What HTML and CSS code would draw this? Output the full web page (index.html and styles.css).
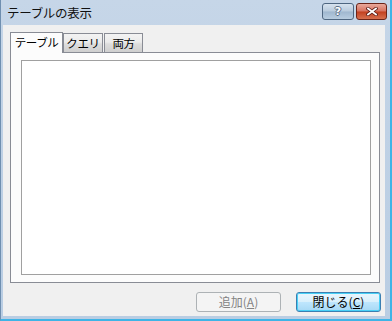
FILE: index.html
```html
<!DOCTYPE html>
<html lang="ja">
<head>
    <meta charset="UTF-8">
    <title>テーブルの表示</title>
    <link rel="stylesheet" href="styles.css">
</head>
<body>
    <div class="window">
        <div class="titlebar">
            <span class="title">テーブルの表示</span>
            <div class="caption-buttons">
                <button class="cap-btn help">?</button>
                <button class="cap-btn close">
                    <svg viewBox="0 0 12 9" width="12" height="9">
                        <path d="M2 1.5L10 7.5M10 1.5L2 7.5" stroke="#5a1a14" stroke-width="3.4" stroke-linecap="square"></path>
                        <path d="M2 1.5L10 7.5M10 1.5L2 7.5" stroke="#ffffff" stroke-width="1.8" stroke-linecap="square"></path>
                    </svg>
                </button>
            </div>
        </div>

        <div class="client">
            <div class="tabs">
                <div class="tab active">テーブル</div>
                <div class="tab">クエリ</div>
                <div class="tab">両方</div>
            </div>
            <div class="panel">
                <div class="listbox"></div>
            </div>
            <div class="actions">
                <button class="btn" disabled>追加(<u>A</u>)</button>
                <button class="btn default">閉じる(<u>C</u>)</button>
            </div>
        </div>
    </div>
</body>
</html>
```

FILE: styles.css
```css
* {
    margin: 0;
    padding: 0;
    box-sizing: border-box;
}

html, body {
    width: 100%;
    height: 100%;
    overflow: hidden;
    font-family: "Noto Sans CJK JP", "Liberation Sans", sans-serif;
    font-size: 12px;
    color: #000;
}

.window {
    width: 392px;
    height: 321px;
    display: flex;
    flex-direction: column;
    background: linear-gradient(to bottom, #c6d6e8 0%, #bfd1e5 40%, #b9cde3 100%);
    border-left: 1px solid #6f8fb0;
    border-right: 2px solid #3fb4e6;
    border-bottom: 2px solid #3fb4e6;
}

/* title bar */
.titlebar {
    height: 25px;
    display: flex;
    align-items: flex-start;
    justify-content: space-between;
    padding-left: 6px;
    flex-shrink: 0;
}

.title {
    font-size: 12.5px;
    line-height: 25px;
    letter-spacing: -0.3px;
    color: #101010;
}

.caption-buttons {
    display: flex;
    gap: 2px;
    margin-top: 3px;
    margin-right: 3px;
}

.cap-btn {
    height: 17px;
    border: 1px solid #4e6680;
    border-radius: 3px;
    display: flex;
    align-items: center;
    justify-content: center;
    font-family: "DejaVu Sans", sans-serif;
    font-weight: bold;
    font-size: 11px;
    color: #fff;
}

.help {
    width: 32px;
    background: linear-gradient(to bottom, #d6e2ee 0%, #b9cbdd 48%, #9fb7cf 52%, #b8cde0 100%);
    text-shadow: 1px 0 0 #5a6e86, -1px 0 0 #5a6e86, 0 1px 0 #5a6e86, 0 -1px 0 #5a6e86;
}

.close {
    width: 31px;
    border-color: #6b2418;
    background: linear-gradient(to bottom, #e9a99c 0%, #d7725f 48%, #c2401f 52%, #d6704f 100%);
}

/* client area */
.client {
    flex: 1;
    margin: 0 5px 3px 2px;
    background: #f0f0f0;
    display: flex;
    flex-direction: column;
    padding: 6px 5px 0 7px;
}

.tabs {
    display: flex;
    align-items: flex-end;
    height: 21px;
    position: relative;
    z-index: 1;
}

.tab {
    height: 19px;
    display: flex;
    align-items: center;
    justify-content: center;
    white-space: nowrap;
    border: 1px solid #898c95;
    border-bottom: none;
    background: linear-gradient(to bottom, #f3f3f3 0%, #ebebeb 45%, #dddddd 55%, #cfcfcf 100%);
    margin-right: 1px;
    font-size: 11.5px;
    letter-spacing: -0.4px;
    padding-bottom: 1px;
}

.tab.active {
    width: 53px;
    height: 21px;
    background: #fcfcfc;
    margin-right: 0;
    margin-bottom: -1px;
    padding-bottom: 2px;
}

.tab:nth-child(2) {
    width: 40px;
}

.tab:nth-child(3) {
    width: 39px;
}

.panel {
    height: 231px;
    border: 1px solid #898c95;
    background: #fcfcfc;
    padding: 7px 8px 7px 10px;
    display: flex;
}

.listbox {
    flex: 1;
    border: 1px solid #a0a0a0;
    background: #fff;
}

.actions {
    display: flex;
    justify-content: flex-end;
    gap: 15px;
    padding-top: 9px;
    margin-right: -1px;
}

.btn {
    width: 85px;
    height: 20px;
    border: 1px solid #707070;
    border-radius: 3px;
    background: linear-gradient(to bottom, #f2f2f2 0%, #ebebeb 48%, #dddddd 52%, #cfcfcf 100%);
    font-family: "Noto Sans CJK JP", sans-serif;
    font-size: 12px;
    line-height: 16px;
    color: #000;
}

.btn:disabled {
    border-color: #adb2b5;
    background: #f4f4f4;
    color: #838383;
}

.btn.default {
    border-color: #3c7fb1;
    box-shadow: inset 0 0 0 1px #48d0f6;
    background: linear-gradient(to bottom, #eaf6fd 0%, #d9f0fc 48%, #bee6fd 52%, #a7d9f5 100%);
}
```
